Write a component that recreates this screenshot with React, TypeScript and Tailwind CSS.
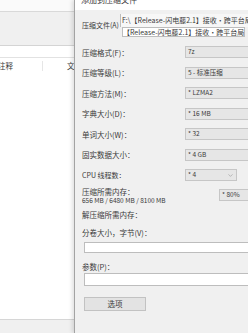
import { ChevronDown } from "lucide-react";

const font = "font-['Noto_Sans_CJK_SC','Noto_Sans',sans-serif]";

export default function App() {
  return (
    <div
      className={`relative flex h-[333px] w-[248px] overflow-hidden bg-white text-[#3a3a3a] ${font}`}
    >
      <BackWindow />
      <Dialog />
    </div>
  );
}

function BackWindow() {
  return (
    <div className="flex w-[74px] shrink-0 flex-col overflow-hidden">
      <div className="h-[12px] border-b border-[#d9d9d9] bg-[#fafafa]" />
      <div className="h-[34px] border-b border-[#d4d4d4] bg-[#f0f0f0]" />
      <div className="h-[12px] border-b border-[#e2e2e2] bg-white" />
      <div className="flex h-[16px] items-center bg-white text-[7.5px] leading-none whitespace-nowrap">
        <div className="flex h-[10px] w-[43px] shrink-0 items-center border-r border-[#e6e6e6]">
          <span className="-ml-[2px]">注释</span>
        </div>
        <span className="ml-[24px]">文件</span>
      </div>
      <div className="flex-1 bg-white" />
      <div className="h-[14px] border-t border-[#d6d6d6] bg-[#f0f0f0]" />
    </div>
  );
}

function Dialog() {
  return (
    <div className="flex w-[200px] shrink-0 flex-col border-l border-[#a3a3a3] bg-[#f0f0f0] shadow-[-2px_0_4px_rgba(0,0,0,0.12)]">
      <div className="h-[10px] bg-white pl-[6px]">
        <p className="-mt-[4px] text-[8px] leading-[8px] whitespace-nowrap">添加到压缩文件</p>
      </div>

      <div className="flex h-[32px] items-start pl-[7px]">
        <span className="mt-[11px] w-[38px] shrink-0 text-[7px] leading-[8px] whitespace-nowrap">
          压缩文件(A)
        </span>
        <div className="flex flex-col">
          <div className="mt-[4px] flex h-[13px] w-[160px] items-center border-l border-[#bdbdbd] bg-[#f7f7f7] pl-[1px] text-[7px] whitespace-nowrap">
            F:\【Release-闪电藤2.1】接收·跨平台局域网
          </div>
          <div className="ml-[2px] flex h-[10px] w-[123px] items-center overflow-hidden border border-[#bdbdbd] bg-white text-[7px] whitespace-nowrap">
            【Release-闪电藤2.1】接收·跨平台局域网
          </div>
        </div>
      </div>

      <Row label="压缩格式(F)：" value="7z" />
      <Row label="压缩等级(L)：" value="5 - 标准压缩" />
      <Row label="压缩方法(M)：" value="* LZMA2" />
      <Row label="字典大小(D)：" value="* 16 MB" />
      <Row label="单词大小(W)：" value="* 32" />
      <Row label="固实数据大小：" value="* 4 GB" />
      <div className="flex h-[20.5px] items-center pl-[7px]">
        <span className="w-[103px] shrink-0 text-[7px] whitespace-nowrap">CPU 线程数：</span>
        <div className="flex h-[12px] w-[52px] items-center justify-between border border-[#c6c6c6] bg-[#e6e6e6] px-[2px] text-[6.5px]">
          <span>* 4</span>
          <ChevronDown size={7} strokeWidth={1.5} className="text-[#7a7a7a]" />
        </div>
      </div>

      <div className="flex h-[21px] items-center pl-[7px]">
        <div className="flex w-[137px] shrink-0 flex-col whitespace-nowrap">
          <span className="text-[7.5px] leading-[9px]">压缩所需内存：</span>
          <span className="text-[6.5px] leading-[9px]">
            656 MB / 6480 MB / 8100 MB
          </span>
        </div>
        <div className="mb-[2px] flex h-[12px] w-[40px] items-center border border-[#c6c6c6] bg-[#e6e6e6] px-[2px] text-[6.5px] whitespace-nowrap">
          * 80%
        </div>
      </div>

      <p className="mt-[3px] pl-[7px] text-[7.5px] leading-[9px] whitespace-nowrap">解压缩所需内存：</p>

      <p className="mt-[9px] pl-[7px] text-[7.5px] leading-[9px] whitespace-nowrap">分卷大小，字节(V)：</p>
      <div className="mt-[5px] ml-[9px] h-[11px] w-[200px] shrink-0 border border-[#bdbdbd] bg-white" />

      <p className="mt-[9px] pl-[7px] text-[7.5px] leading-[9px] whitespace-nowrap">参数(P)：</p>
      <div className="mt-[2px] ml-[9px] h-[13px] w-[200px] shrink-0 border border-[#bdbdbd] bg-white" />

      <button className="mt-[11px] ml-[9px] flex h-[14px] w-[62px] items-center justify-center border border-[#c2c2c2] bg-[#e3e3e3] text-[7.5px]">
        选项
      </button>
    </div>
  );
}

function Row({ label, value }: { label: string; value: string }) {
  return (
    <div className="flex h-[20.5px] items-center pl-[7px]">
      <span className="w-[103px] shrink-0 text-[7.5px] whitespace-nowrap">{label}</span>
      <div className="flex h-[12px] w-[80px] shrink-0 items-center border border-[#c6c6c6] bg-[#e6e6e6] px-[2px] text-[6.5px] whitespace-nowrap">
        {value}
      </div>
    </div>
  );
}
